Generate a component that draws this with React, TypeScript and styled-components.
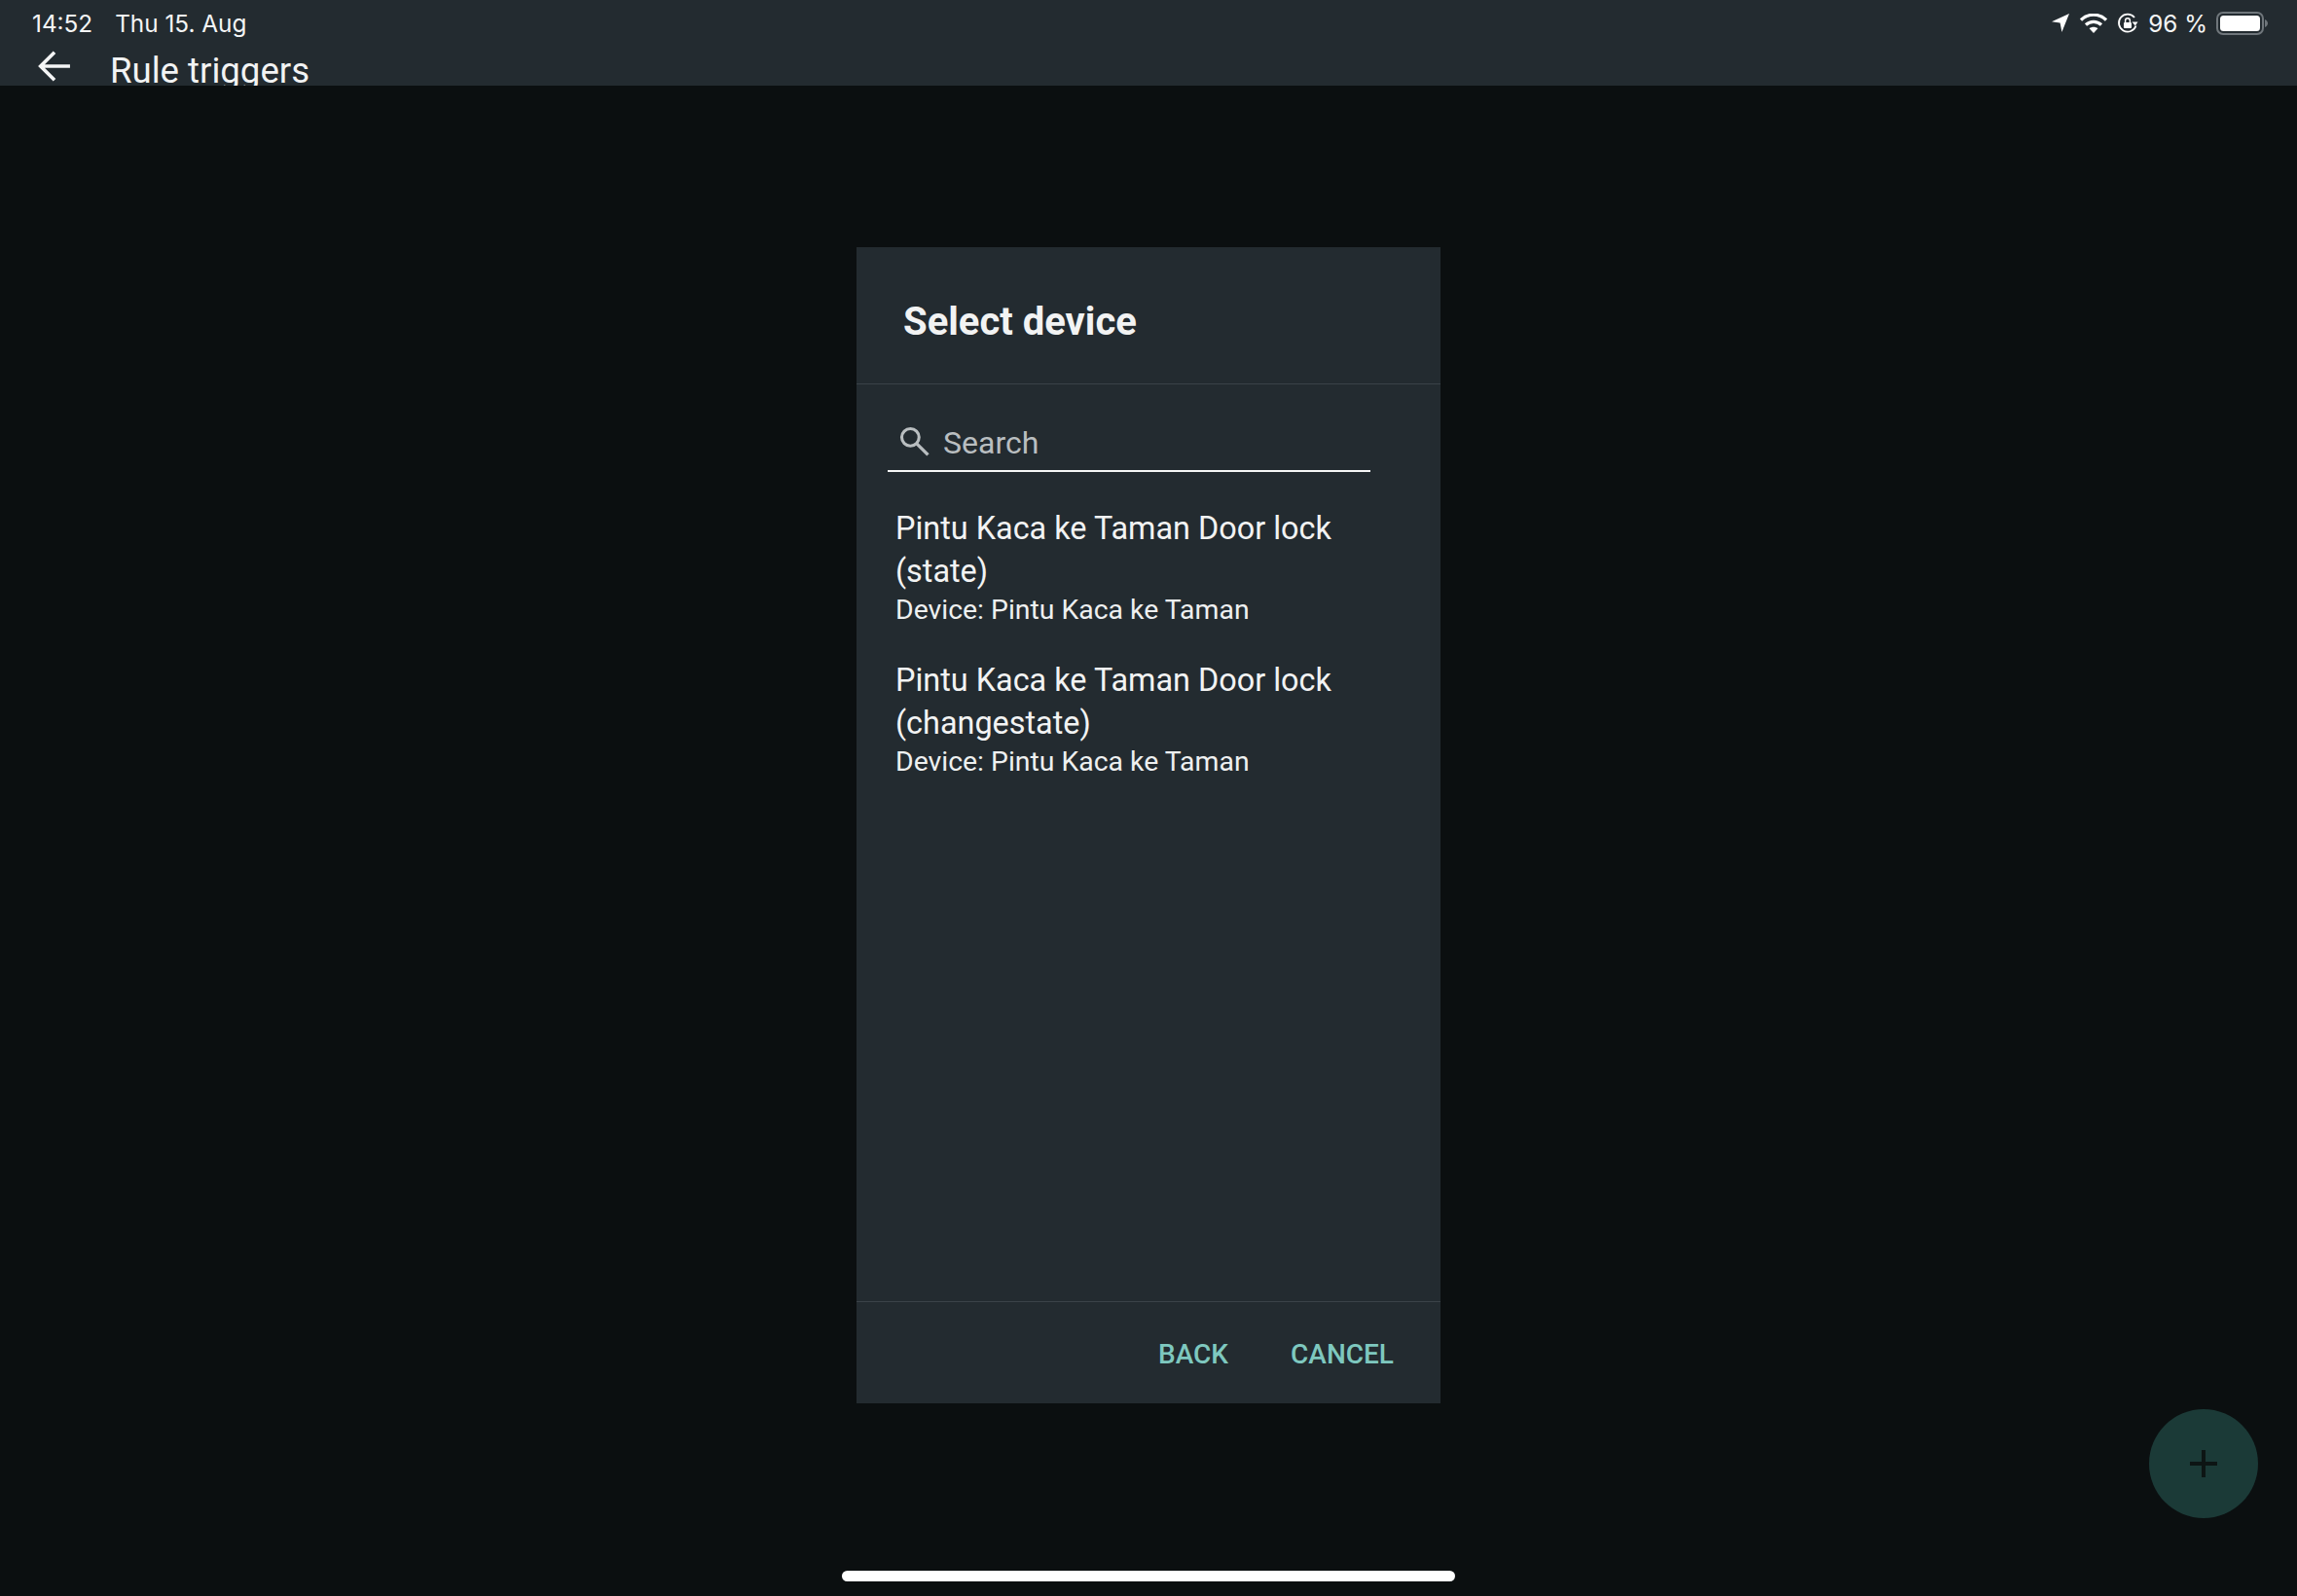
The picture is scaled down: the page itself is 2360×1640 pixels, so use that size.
import React from "react";
import styled, { createGlobalStyle } from "styled-components";

const Global = createGlobalStyle`
  html, body { margin: 0; padding: 0; background: #0b0f10; }
  * { box-sizing: border-box; }
`;

const Page = styled.div`
  position: relative;
  width: 2360px;
  height: 1640px;
  overflow: hidden;
  background: #0b0f10;
  display: flex;
  flex-direction: column;
  font-family: Roboto, "Liberation Sans", sans-serif;
`;

const TopBar = styled.header`
  height: 88px;
  flex: none;
  overflow: hidden;
  background: #232b30;
  color: #f4f5f5;
`;

const StatusRow = styled.div`
  height: 47px;
  padding: 0 30px 0 33px;
  display: flex;
  align-items: center;
  justify-content: space-between;
  font-family: Inter, "Liberation Sans", sans-serif;
  font-size: 24.3px;
`;

const StatusGroup = styled.div`
  display: flex;
  align-items: center;
`;

const Clock = styled.span`
  margin-right: 23px;
`;

const Percent = styled.span`
  margin: 0 9px 0 10px;
`;

const TitleRow = styled.div`
  display: flex;
  align-items: flex-start;
  padding-left: 39px;
`;

const BackIcon = styled.svg`
  width: 34px;
  height: 34px;
  margin: 4px 40px 0 0;
  flex: none;
`;

const PageTitle = styled.h1`
  margin: 0;
  padding-top: 4px;
  font-size: 36.6px;
  line-height: 44px;
  font-weight: 400;
  color: #f2f3f3;
`;

const Main = styled.main`
  flex: 1;
  display: flex;
  justify-content: center;
  padding-top: 166px;
`;

const Dialog = styled.section`
  width: 600px;
  height: 1188px;
  background: #232b30;
  display: flex;
  flex-direction: column;
  color: #f2f3f3;
`;

const DialogHeader = styled.div`
  height: 141px;
  flex: none;
  padding: 55px 0 0 48px;
  border-bottom: 1px solid #3a4248;
`;

const DialogTitle = styled.h2`
  margin: 0;
  font-size: 40px;
  line-height: 44px;
  font-weight: 700;
`;

const DialogBody = styled.div`
  flex: 1;
  padding: 0 32px;
`;

const SearchBox = styled.div`
  width: 496px;
  height: 90px;
  border-bottom: 2px solid #f5f6f6;
  display: flex;
  align-items: center;
  padding: 31px 0 0 12px;
  color: #b9bec0;
  font-size: 32px;
`;

const SearchIcon = styled.svg`
  width: 31px;
  height: 31px;
  margin: -3px 14px 0 0;
  flex: none;
`;

const List = styled.ul`
  list-style: none;
  margin: 0;
  padding: 36px 0 0 8px;
  width: 480px;
`;

const Item = styled.li`
  margin-bottom: 32px;
`;

const ItemName = styled.div`
  font-size: 32.4px;
  line-height: 44px;
`;

const ItemDevice = styled.div`
  font-size: 28.4px;
  line-height: 36px;
  color: #eef0f0;
`;

const DialogFooter = styled.div`
  height: 105px;
  flex: none;
  border-top: 1px solid #3a4248;
  display: flex;
  align-items: center;
  justify-content: flex-end;
  gap: 64px;
  padding: 3px 48px 0 0;
`;

const ActionButton = styled.button`
  background: none;
  border: 0;
  padding: 0;
  font: 500 28px/36px Roboto, "Liberation Sans", sans-serif;
  color: #7ec8bf;
  text-transform: uppercase;
`;

const Fab = styled.button`
  position: absolute;
  left: 2208px;
  top: 1448px;
  width: 112px;
  height: 112px;
  border: 0;
  padding: 0;
  border-radius: 50%;
  background: #1b3a37;
  display: flex;
  align-items: center;
  justify-content: center;
`;

const HomeBar = styled.div`
  position: absolute;
  left: 865px;
  top: 1614px;
  width: 630px;
  height: 11px;
  border-radius: 6px;
  background: #ffffff;
`;

const Sym = styled.svg`
  display: block;
  flex: none;
`;

const items = [
  { name: "Pintu Kaca ke Taman Door lock (state)", device: "Device: Pintu Kaca ke Taman" },
  { name: "Pintu Kaca ke Taman Door lock (changestate)", device: "Device: Pintu Kaca ke Taman" },
];

export default function App() {
  return (
    <Page>
      <Global />
      <TopBar>
        <StatusRow>
          <StatusGroup>
            <Clock>14:52</Clock>
            <span>Thu 15. Aug</span>
          </StatusGroup>
          <StatusGroup>
            <Sym width="18" height="19" viewBox="0 0 18 19" style={{ marginRight: 11 }}>
              <path d="M18 0 L0 8.2 L8.6 9.6 L10.4 19 Z" fill="#fff" />
            </Sym>
            <Sym width="28" height="20" viewBox="0 0 28 20" style={{ marginRight: 10 }}>
              <path d="M1 6.5 C8.5 -0.6 19.5 -0.6 27 6.5" stroke="#fff" strokeWidth="3.2" fill="none" />
              <path d="M6 11.5 C10.8 7.2 17.2 7.2 22 11.5" stroke="#fff" strokeWidth="3.2" fill="none" />
              <path d="M14 20 L9.6 15.2 C12 13.2 16 13.2 18.4 15.2 Z" fill="#fff" />
            </Sym>
            <Sym width="22" height="22" viewBox="0 0 22 22">
              <path d="M19.5 13.5 A9 9 0 1 1 18 5" stroke="#fff" strokeWidth="1.8" fill="none" />
              <path d="M21.5 9.5 L15.5 9.5 L18.8 13.5 Z" fill="#fff" />
              <rect x="7" y="10" width="8" height="6" rx="1" fill="#fff" />
              <path d="M8.6 10 V8.2 A2.4 2.4 0 0 1 13.4 8.2 V10" stroke="#fff" strokeWidth="1.4" fill="none" />
            </Sym>
            <Percent>96 %</Percent>
            <Sym width="53" height="24" viewBox="0 0 53 24">
              <rect x="1" y="1" width="47" height="22" rx="6" stroke="#6f767b" strokeWidth="2" fill="none" />
              <rect x="4" y="4" width="41" height="16" rx="3.5" fill="#fff" />
              <path d="M50 8 C52 9 53 10.5 53 12 C53 13.5 52 15 50 16 Z" fill="#6f767b" />
            </Sym>
          </StatusGroup>
        </StatusRow>
        <TitleRow>
          <BackIcon viewBox="0 0 32 32">
            <path d="M31 16 H3 M16 2.5 L2.5 16 L16 29.5" stroke="#f4f5f5" strokeWidth="3.4" fill="none" />
          </BackIcon>
          <PageTitle>Rule triggers</PageTitle>
        </TitleRow>
      </TopBar>
      <Main>
        <Dialog>
          <DialogHeader>
            <DialogTitle>Select device</DialogTitle>
          </DialogHeader>
          <DialogBody>
            <SearchBox>
              <SearchIcon viewBox="0 0 30 30">
                <circle cx="11" cy="11" r="8.6" stroke="#b9bec0" strokeWidth="3" fill="none" />
                <path d="M17.5 17.5 L28.5 28.5" stroke="#b9bec0" strokeWidth="3.2" />
              </SearchIcon>
              Search
            </SearchBox>
            <List>
              {items.map((item) => (
                <Item key={item.name}>
                  <ItemName>{item.name}</ItemName>
                  <ItemDevice>{item.device}</ItemDevice>
                </Item>
              ))}
            </List>
          </DialogBody>
          <DialogFooter>
            <ActionButton>Back</ActionButton>
            <ActionButton>Cancel</ActionButton>
          </DialogFooter>
        </Dialog>
      </Main>
      <Fab>
        <svg width="28" height="28" viewBox="0 0 28 28">
          <path d="M14 0 V28 M0 14 H28" stroke="#0d1514" strokeWidth="4" />
        </svg>
      </Fab>
      <HomeBar />
    </Page>
  );
}
